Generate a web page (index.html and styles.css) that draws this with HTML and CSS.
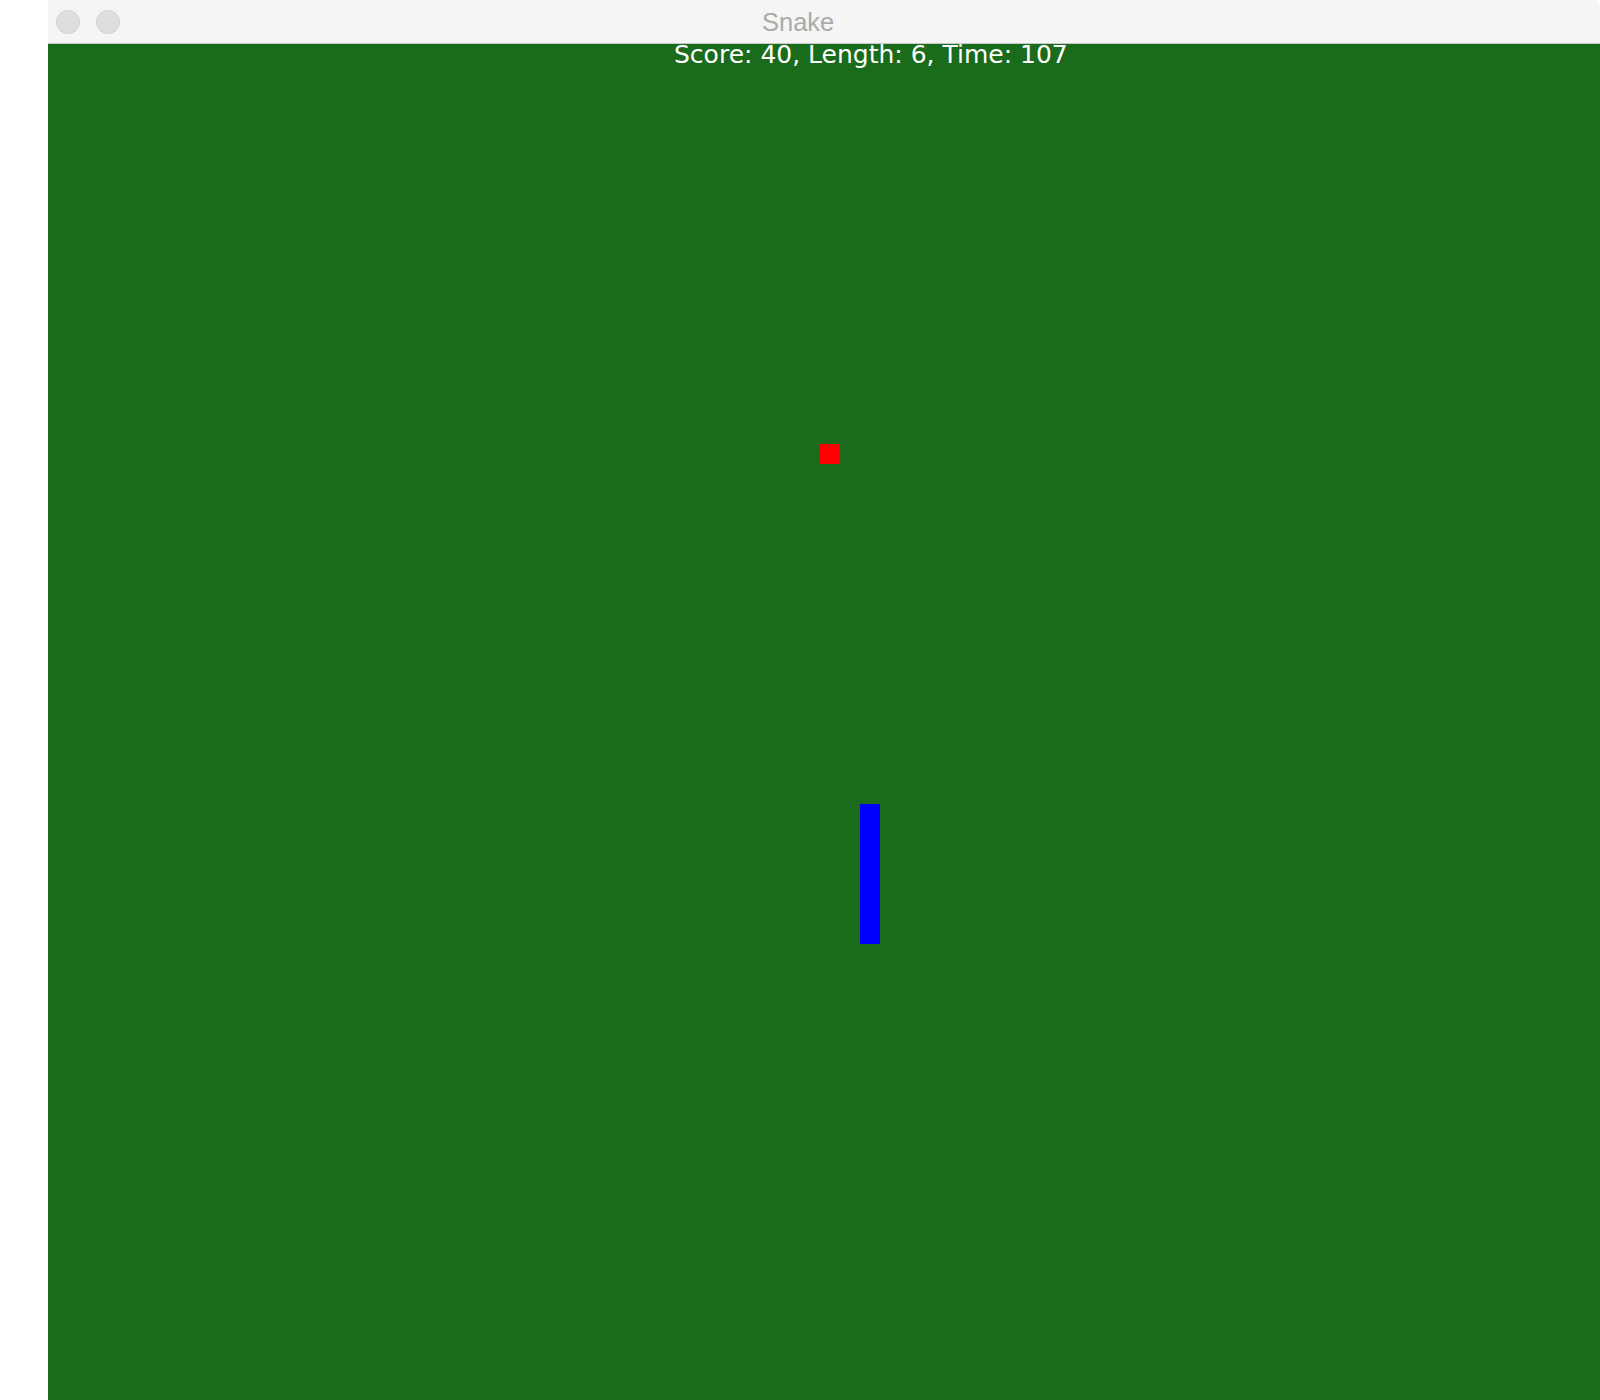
FILE: index.html
```html
<!DOCTYPE html>
<html>
<head>
<meta charset="utf-8">
<title>Snake</title>
<link rel="stylesheet" href="styles.css">
</head>
<body>
<div class="window">
  <div class="titlebar">
    <div class="buttons">
      <span class="btn"></span>
      <span class="btn"></span>
    </div>
    <div class="title">Snake</div>
  </div>
  <div class="board">
    <div class="score">Score: 40, Length: 6, Time: 107</div>
    <div class="food"></div>
    <div class="snake"></div>
  </div>
</div>
</body>
</html>
```
FILE: styles.css
```css
html, body {
  margin: 0;
  padding: 0;
  background: #ffffff;
}
.window {
  margin-left: 48px;
  width: 1552px;
  height: 1400px;
  display: flex;
  flex-direction: column;
  overflow: hidden;
  border-top-right-radius: 8px;
}
.titlebar {
  height: 43px;
  flex: none;
  background: #f5f5f5;
  border-bottom: 1px solid #c9c9c9;
  display: flex;
  align-items: center;
  box-sizing: content-box;
}
.buttons {
  display: flex;
  gap: 16px;
  padding-left: 8px;
  width: 64px;
  flex: none;
}
.btn {
  width: 22px;
  height: 22px;
  border-radius: 50%;
  background: #dedede;
  border: 1px solid #d0d0d0;
}
.title {
  padding-left: 642px;
  padding-top: 2px;
  font-family: "Liberation Sans", Arial, sans-serif;
  font-size: 25.5px;
  color: #aaaaaa;
  line-height: 43px;
}
.board {
  flex: 1;
  background: #1a6b1b;
  position: relative;
}
.score {
  padding-left: 626px;
  font-family: "DejaVu Sans", sans-serif;
  font-size: 25px;
  line-height: 21px;
  color: #ffffff;
  white-space: nowrap;
}
.food {
  position: absolute;
  left: 772px;
  top: 400px;
  width: 20px;
  height: 20px;
  background: #ff0000;
}
.snake {
  position: absolute;
  left: 812px;
  top: 760px;
  width: 20px;
  height: 140px;
  background: #0000ff;
}
```
